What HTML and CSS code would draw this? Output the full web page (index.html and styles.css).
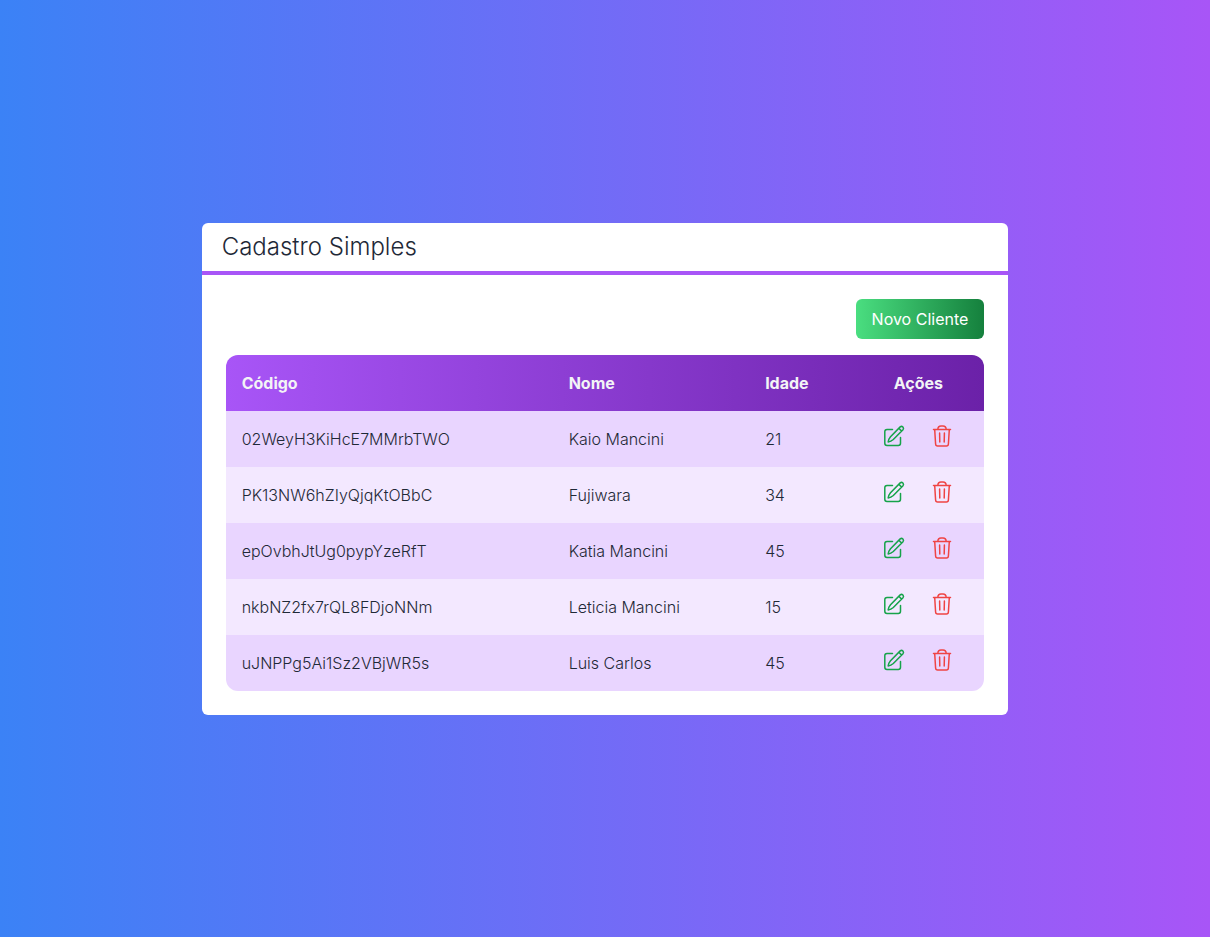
FILE: index.html
```
<!DOCTYPE html>
<html lang="pt-BR">
<head>
<meta charset="utf-8">
<meta name="viewport" content="width=device-width, initial-scale=1">
<title>Cadastro Simples</title>
<link rel="stylesheet" href="styles.css">
</head>
<body>
<svg class="sprite" aria-hidden="true">
  <symbol id="edit" viewBox="0 0 24 24">
    <path d="M10.500 5.600H5Q2.800 5.600 2.800 7.800V19.300Q2.800 21.500 5 21.500H16.300Q18.500 21.500 18.500 19.300V13.500"/>
    <path d="M18.200 2.900Q19.600 1.800 20.900 3Q22.100 4.400 21 5.800L11.300 15.500Q9 17.700 6.200 17.900Q6.400 15.200 8.500 12.700ZM16.800 4.300L19.700 7.100"/>
  </symbol>
  <symbol id="trash" viewBox="0 0 24 24">
    <path d="M3.500 5.500H20.500M7.800 5.500Q8 2 11 2H13Q16 2 16.200 5.500M4.700 5.500L5.600 20Q5.700 21.900 7.600 21.900H16.400Q18.300 21.900 18.400 20L19.300 5.500M9.600 9L9.800 18M14.400 9L14.200 18"/>
  </symbol>
</svg>
<main class="card">
  <h1 class="title">Cadastro Simples</h1>
  <div class="content">
    <button class="new" type="button">Novo Cliente</button>
    <table class="clients">
      <thead>
        <tr><th class="code">Código</th><th class="name">Nome</th><th class="age">Idade</th><th class="actions">Ações</th></tr>
      </thead>
      <tbody>
        <tr><td>02WeyH3KiHcE7MMrbTWO</td><td>Kaio Mancini</td><td>21</td><td class="tools"><button class="tool edit" type="button" aria-label="Editar"><svg><use href="#edit"/></svg></button><button class="tool trash" type="button" aria-label="Excluir"><svg><use href="#trash"/></svg></button></td></tr>
        <tr><td>PK13NW6hZIyQjqKtOBbC</td><td>Fujiwara</td><td>34</td><td class="tools"><button class="tool edit" type="button" aria-label="Editar"><svg><use href="#edit"/></svg></button><button class="tool trash" type="button" aria-label="Excluir"><svg><use href="#trash"/></svg></button></td></tr>
        <tr><td>epOvbhJtUg0pypYzeRfT</td><td>Katia Mancini</td><td>45</td><td class="tools"><button class="tool edit" type="button" aria-label="Editar"><svg><use href="#edit"/></svg></button><button class="tool trash" type="button" aria-label="Excluir"><svg><use href="#trash"/></svg></button></td></tr>
        <tr><td>nkbNZ2fx7rQL8FDjoNNm</td><td>Leticia Mancini</td><td>15</td><td class="tools"><button class="tool edit" type="button" aria-label="Editar"><svg><use href="#edit"/></svg></button><button class="tool trash" type="button" aria-label="Excluir"><svg><use href="#trash"/></svg></button></td></tr>
        <tr><td>uJNPPg5Ai1Sz2VBjWR5s</td><td>Luis Carlos</td><td>45</td><td class="tools"><button class="tool edit" type="button" aria-label="Editar"><svg><use href="#edit"/></svg></button><button class="tool trash" type="button" aria-label="Excluir"><svg><use href="#trash"/></svg></button></td></tr>
      </tbody>
    </table>
  </div>
</main>
</body>
</html>
```
FILE: styles.css
```
* { box-sizing: border-box; }
body {
  margin: 0;
  min-height: 100vh;
  display: flex;
  align-items: center;
  justify-content: center;
  background: linear-gradient(to right, #3b82f6, #a855f7);
  color: #1f2937;
  font: 300 16px/24px Inter, sans-serif;
}
.sprite { position: absolute; width: 0; height: 0; }
.card {
  width: 66.6667%;
  background: #fff;
  border-radius: 6px;
}
.title {
  margin: 0;
  padding: 8px 20px;
  border-bottom: 4px solid #a855f7;
  font-size: 24px;
  font-weight: 300;
  line-height: 32px;
}
.content {
  display: flex;
  flex-direction: column;
  gap: 16px;
  padding: 24px;
}
.new {
  align-self: flex-end;
  padding: 8px 16px;
  border: 0;
  border-radius: 6px;
  background: linear-gradient(to right, #4ade80, #15803d);
  color: #fff;
  font: inherit;
  font-weight: 400;
}
.clients {
  width: 100%;
  table-layout: fixed;
  border-collapse: collapse;
  border-radius: 12px;
  overflow: hidden;
}
.clients thead {
  background: linear-gradient(to right, #a855f7, #6b21a8);
  color: #f3f4f6;
}
.clients th, .clients td { padding: 16px; text-align: left; }
.clients th { font-weight: 700; }
.clients tbody tr { background: #f3e8ff; }
.clients tbody tr:nth-child(odd) { background: #e9d5ff; }
.code { width: 43.1%; }
.name { width: 25.9%; }
.age { width: 13.6%; }
.clients .actions { text-align: center; }
.clients .tools {
  padding: 1px 0 7px;
  text-align: center;
  vertical-align: top;
}
.tool {
  margin: 4px;
  padding: 8px;
  border: 0;
  border-radius: 50%;
  background: none;
  vertical-align: top;
}
.tool svg {
  display: block;
  width: 24px;
  height: 24px;
  fill: none;
  stroke: currentColor;
  stroke-width: 1.5;
  stroke-linecap: round;
  stroke-linejoin: round;
}
.edit { color: #16a34a; }
.trash { color: #ef4444; }
```
